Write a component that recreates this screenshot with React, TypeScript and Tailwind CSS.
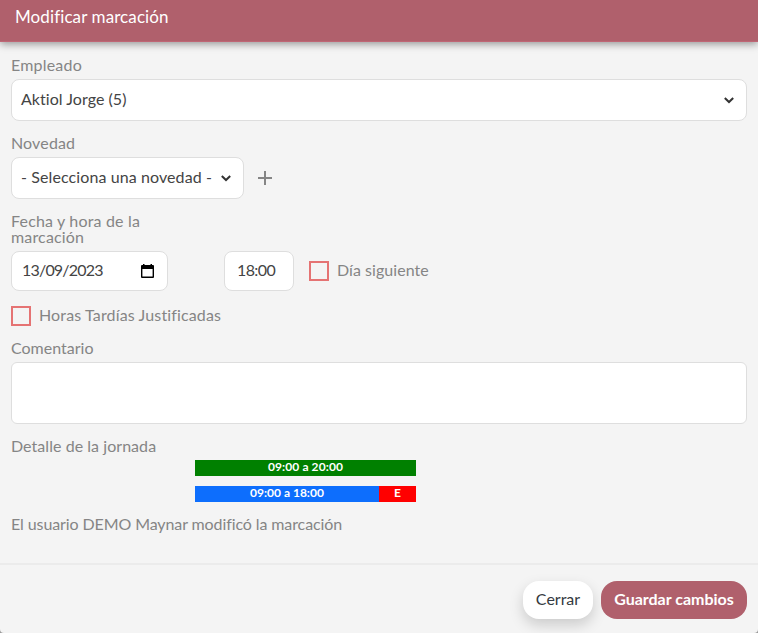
import React from 'react';

const Chevron = () => (
  <svg viewBox="0 0 10 7" fill="none" stroke="#333" strokeWidth="2" className="w-[10px] h-[7px] shrink-0">
    <path d="M0.8 1 L5 5 L9.2 1" />
  </svg>
);

const CalendarIcon = () => (
  <svg viewBox="0 0 13 14" fill="#000" className="w-[13px] h-[14px] shrink-0">
    <path fillRule="evenodd" d="M1 1h1V0h1.5v1h6V0H11v1h1a1 1 0 0 1 1 1v11a1 1 0 0 1-1 1H1a1 1 0 0 1-1-1V2a1 1 0 0 1 1-1Zm0.4 4v7.6h10.2V5Z" />
  </svg>
);

const Checkbox = () => <span className="w-5 h-5 shrink-0 border-2 border-[#e57373]" />;

const App: React.FC = () => {
  return (
    <div className="w-[758px] h-[633px] bg-[#999] overflow-hidden">
      <div className="h-full flex flex-col rounded-b-[4px] bg-[#f4f4f4] font-['Lato',sans-serif] text-[16px] leading-4 text-[#858585] [font-variant-ligatures:none]">
        {/* Cabecera */}
        <header className="h-[42px] shrink-0 pl-[15px] pt-[9px] bg-[#b0606c] border-b border-[#bf6675] text-white text-[17px] shadow-[0_2px_8px_rgba(0,0,0,0.4)]">
          <span className="tracking-[0.1px]">Modificar marcación</span>
        </header>

        {/* Formulario */}
        <main className="h-[523px] shrink-0 flex flex-col pl-[11px] pr-[11px] pt-[15px] border-b-2 border-[#ebebeb]">
          <label className="h-4 tracking-[0.2px]">Empleado</label>
          <div className="mt-1.5 h-[42px] flex items-center justify-between rounded-lg border border-[#dedede] bg-white pl-[9px] pr-3 text-[#444]">
            <span className="pb-0.5 tracking-[0.05px]">Aktiol Jorge (5)</span>
            <Chevron />
          </div>

          <label className="mt-3.5 h-4 tracking-[0.15px]">Novedad</label>
          <div className="mt-1.5 flex items-center">
            <div className="w-[233px] h-[42px] flex items-center justify-between rounded-lg border border-[#dedede] bg-white pl-[9px] pr-3 text-[#444]">
              <span className="pb-0.5 tracking-[0.1px] whitespace-nowrap">- Selecciona una novedad -</span>
              <Chevron />
            </div>
            <svg viewBox="0 0 14 14" stroke="#858585" strokeWidth="2" className="ml-[14px] w-[14px] h-[14px]">
              <path d="M7 0v14M0 7h14" />
            </svg>
          </div>

          <label className="mt-3.5 h-8 w-[150px] tracking-[0.17px]">Fecha y hora de la marcación</label>
          <div className="mt-1.5 flex items-center">
            <div className="w-[157px] h-10 flex items-center justify-between rounded-lg border border-[#dedede] bg-white pl-[10px] pr-[13px] text-[#444]">
              <span className="pb-0.5 tracking-[-0.8px]">13/09/2023</span>
              <CalendarIcon />
            </div>
            <div className="ml-14 w-[70px] h-10 flex items-center rounded-lg border border-[#dedede] bg-white pl-3 text-[#444]">
              <span className="pb-0.5 tracking-[-0.6px]">18:00</span>
            </div>
            <label className="ml-[15px] flex items-center gap-2">
              <Checkbox />
              <span className="pb-0.5 tracking-[0.05px]">Día siguiente</span>
            </label>
          </div>

          <label className="mt-[15px] flex items-center gap-2">
            <Checkbox />
            <span className="pb-0.5 tracking-[0.14px]">Horas Tardías Justificadas</span>
          </label>

          <label className="mt-3.5 h-4">Comentario</label>
          <div className="mt-1.5 h-[62px] rounded-md border border-[#dedede] bg-white" />

          <p className="mt-3.5 h-4 tracking-[0.05px]">Detalle de la jornada</p>
          <div className="mt-1.5 ml-[184px] w-[221px] flex flex-col gap-[10px] text-[12px] leading-[14px] font-bold text-white text-center">
            <div className="h-4 bg-[#008000] tracking-[0.1px]">09:00 a 20:00</div>
            <div className="h-4 flex">
              <div className="w-[184px] bg-[#0d6efd]">09:00 a 18:00</div>
              <div className="w-[37px] bg-[#ff0000]">E</div>
            </div>
          </div>
          <p className="mt-3.5 h-4 tracking-[-0.1px]">El usuario DEMO Maynar modificó la marcación</p>
        </main>

        {/* Acciones */}
        <footer className="flex justify-end gap-2 pt-4 pr-[11px]">
          <button className="w-[70px] h-[38px] pb-0.5 rounded-2xl bg-white text-[#343a40] shadow-[0_6px_14px_rgba(0,0,0,0.17)]">
            Cerrar
          </button>
          <button className="w-[146px] h-[38px] pb-0.5 rounded-2xl bg-[#b0606c] text-white font-bold">
            Guardar cambios
          </button>
        </footer>
      </div>
    </div>
  );
};

export default App;
